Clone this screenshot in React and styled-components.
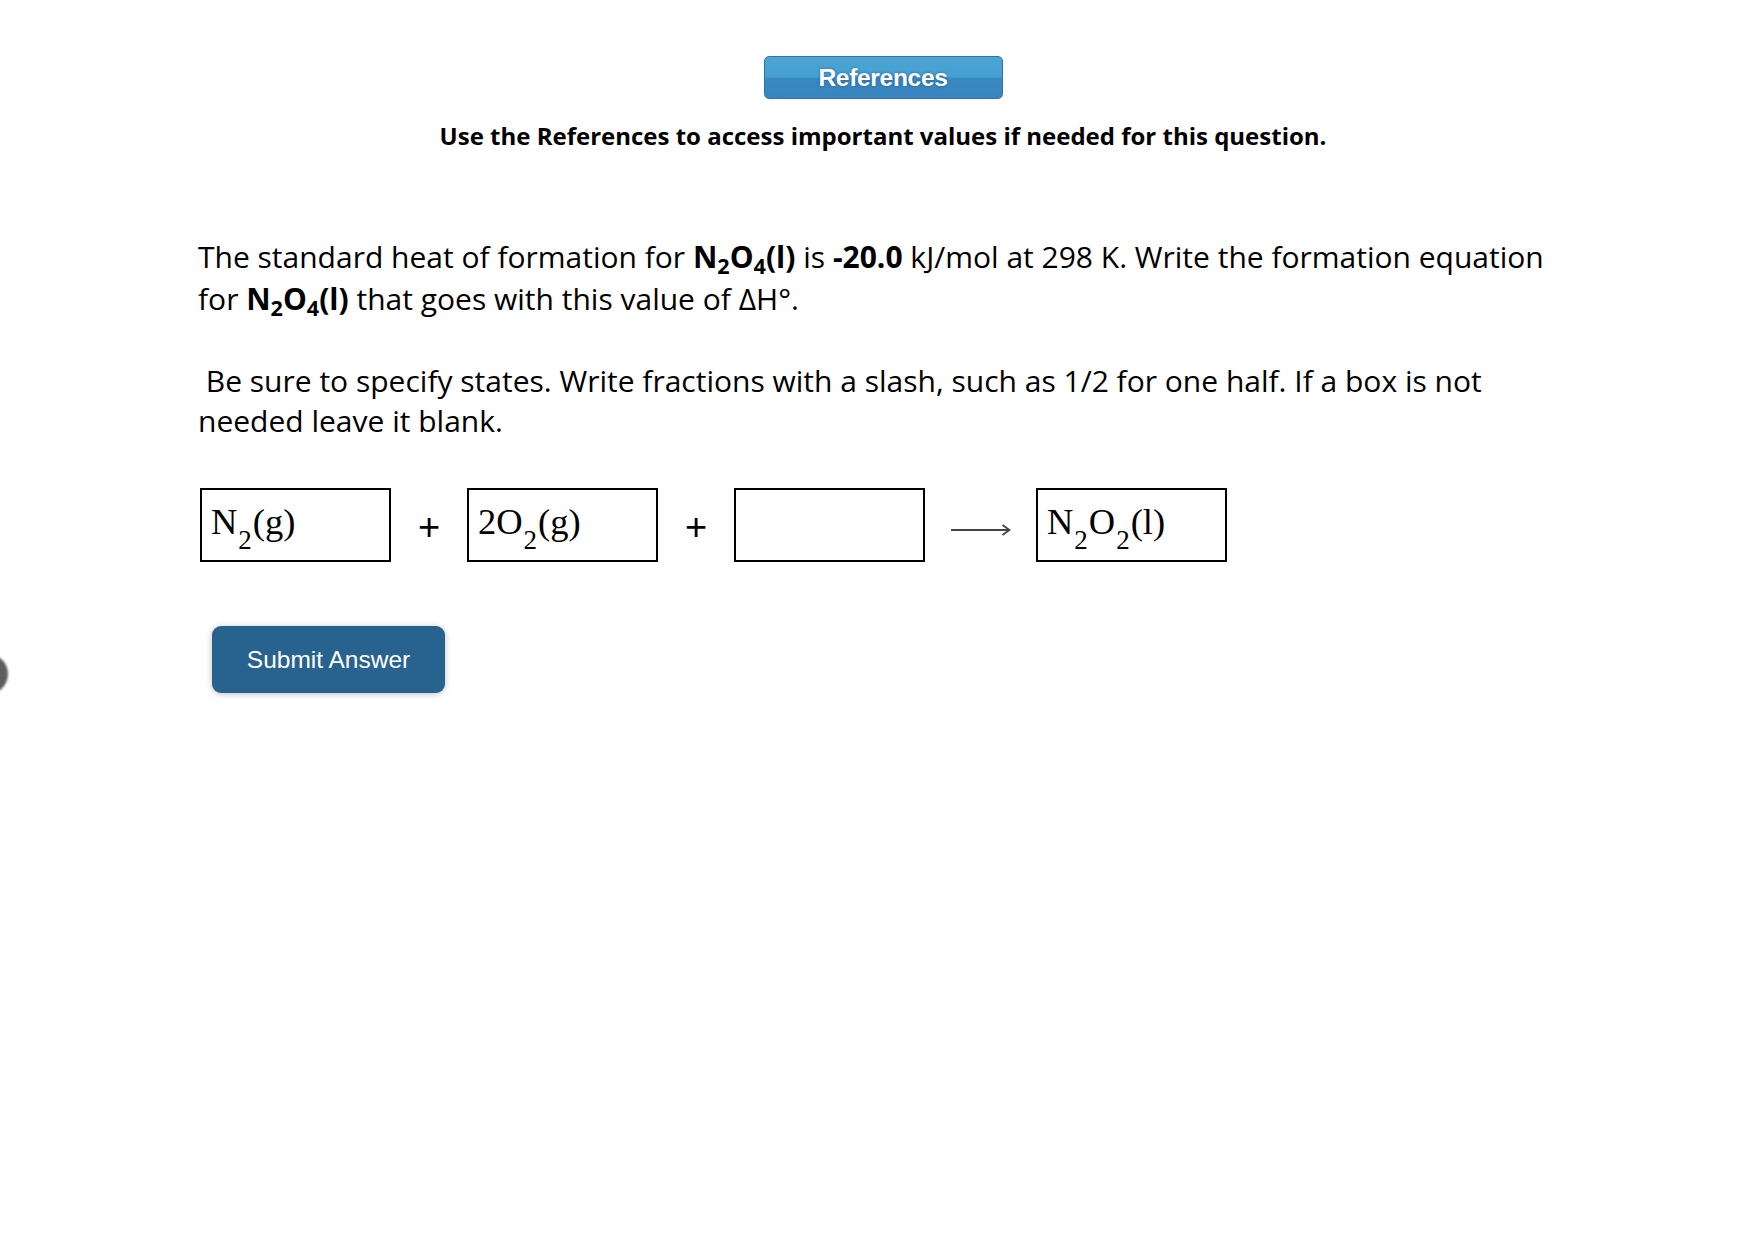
import styled, { createGlobalStyle } from 'styled-components';

const GlobalStyle = createGlobalStyle`
  html, body {
    margin: 0;
    padding: 0;
    background: #ffffff;
  }
  body {
    font-family: 'Open Sans', 'Liberation Sans', sans-serif;
    color: #111;
  }
`;

const Page = styled.div`
  position: relative;
  min-height: 1248px;
  overflow: hidden;
`;

const Header = styled.header`
  display: flex;
  flex-direction: column;
  align-items: center;
  padding: 56px 0 0 14px;
`;

const RefButton = styled.button`
  width: 239px;
  height: 43px;
  border: 1px solid #2d74a7;
  border-radius: 5px;
  background: linear-gradient(to bottom, #4aa5d5 0%, #46a0d1 48%, #3a88c2 52%, #3884bf 100%);
  color: #fff;
  font-family: 'Liberation Sans', Arial, sans-serif;
  font-weight: 700;
  font-size: 24.5px;
  letter-spacing: -0.3px;
  text-shadow: 0 0 3px rgba(20, 60, 110, 0.6);
  cursor: pointer;
  padding: 0;
`;

const Notice = styled.p`
  margin: 22px 0 0;
  font-size: 24px;
  line-height: 30px;
  font-weight: 700;
  color: #000;
`;

const Question = styled.section`
  padding: 85px 0 0 198px;
  width: 1370px;
`;

const Paragraph = styled.p`
  margin: 0 0 ${(p) => p.$gap || 0}px;
  font-size: 30px;
  line-height: ${(p) => p.$lh || 42}px;
  color: #000;
`;

const Sub = styled.sub`
  font-size: 0.72em;
  line-height: 0;
  vertical-align: -0.28em;
`;

const EquationRow = styled.div`
  display: flex;
  align-items: center;
  margin-top: 47px;
  margin-left: 2px;
`;

const AnswerBox = styled.div`
  box-sizing: border-box;
  width: 191px;
  height: 74px;
  border: 2px solid #000;
  padding: 10px 0 0 9px;
  font-family: 'Liberation Serif', 'Times New Roman', serif;
  font-size: 36.5px;
  line-height: 44px;
  color: #000;
  white-space: nowrap;
`;

const ChemSub = styled.span`
  display: inline-block;
  font-size: 27px;
  transform: translateY(15px);
  margin: 0 1px;
`;

const Plus = styled.span`
  width: 76px;
  text-align: center;
  font-family: 'Liberation Sans', Arial, sans-serif;
  font-size: 38px;
  line-height: 40px;
  color: #000;
  padding-top: 4px;
`;

const ArrowWrap = styled.span`
  display: flex;
  justify-content: center;
  width: 111px;
  padding-top: 10px;
`;

const SubmitButton = styled.button`
  margin: 64px 0 0 14px;
  width: 233px;
  height: 67px;
  border: none;
  border-radius: 9px;
  background: #28628f;
  color: #fff;
  font-family: 'Liberation Sans', Arial, sans-serif;
  font-size: 24.5px;
  box-shadow: 0 1px 6px rgba(0, 0, 0, 0.25);
  cursor: pointer;
`;

const EdgeDot = styled.div`
  position: absolute;
  left: -32px;
  top: 654px;
  width: 40px;
  height: 40px;
  border-radius: 50%;
  background: #5e5e5e;
  filter: blur(1px);
`;

const Arrow = () => (
  <svg width="60" height="14" viewBox="0 0 60 14">
    <line x1="0" y1="7" x2="58" y2="7" stroke="#444" strokeWidth="2.2" />
    <path d="M51.5 2 L58.5 7 L51.5 12" fill="none" stroke="#444" strokeWidth="1.8" />
  </svg>
);

const App = () => {
  return (
    <Page>
      <GlobalStyle />
      <EdgeDot />
      <Header>
        <RefButton>References</RefButton>
        <Notice>Use the References to access important values if needed for this question.</Notice>
      </Header>
      <Question>
        <Paragraph $gap={41}>
          The standard heat of formation for <b>N<Sub>2</Sub>O<Sub>4</Sub>(l)</b> is <b>-20.0</b> kJ/mol
          at 298 K. Write the formation equation for <b>N<Sub>2</Sub>O<Sub>4</Sub>(l)</b> that goes with
          this value of ΔH°.
        </Paragraph>
        <Paragraph $lh={40}>
          &nbsp;Be sure to specify states. Write fractions with a slash, such as 1/2 for one half. If a box
          is not needed leave it blank.
        </Paragraph>
        <EquationRow>
          <AnswerBox>
            N<ChemSub>2</ChemSub>(g)
          </AnswerBox>
          <Plus>+</Plus>
          <AnswerBox>
            2O<ChemSub>2</ChemSub>(g)
          </AnswerBox>
          <Plus>+</Plus>
          <AnswerBox />
          <ArrowWrap>
            <Arrow />
          </ArrowWrap>
          <AnswerBox>
            N<ChemSub>2</ChemSub>O<ChemSub>2</ChemSub>(l)
          </AnswerBox>
        </EquationRow>
        <SubmitButton>Submit Answer</SubmitButton>
      </Question>
    </Page>
  );
};

export default App;
